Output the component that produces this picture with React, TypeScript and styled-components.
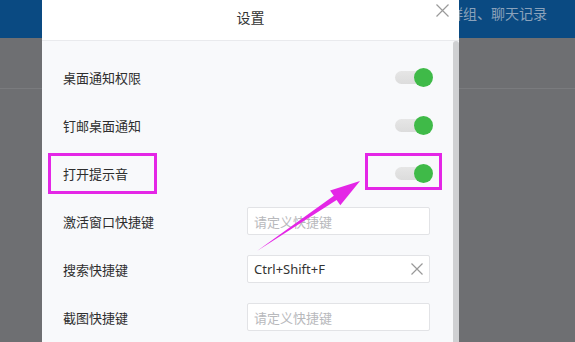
import React, { FC } from 'react'
import styled, { createGlobalStyle } from 'styled-components'

const GlobalStyle = createGlobalStyle`
  html, body {
    margin: 0;
    padding: 0;
    background: #6e6f72;
  }
  body {
    font-family: "Noto Sans", "Noto Sans CJK SC", sans-serif;
  }
`

const Page = styled.div`
  position: relative;
  width: 575px;
  height: 342px;
  overflow: hidden;
  background: #6e6f72;
`

const TopBar = styled.div`
  height: 38px;
  background: #0a4a82;
  display: flex;
  justify-content: flex-end;
  align-items: flex-start;
  padding: 5px 28px 0 0;
  box-sizing: border-box;
`

const TopText = styled.span`
  font-size: 14px;
  line-height: 16px;
  color: #8aa2bb;
  font-family: "Noto Sans CJK SC", sans-serif;
`

const SubBar = styled.div`
  height: 50px;
  border-bottom: 1px solid #7a7b7e;
`

const Dialog = styled.div`
  position: absolute;
  left: 42px;
  top: 0;
  width: 417px;
  height: 420px;
  background: #f8f9fb;
  display: flex;
  flex-direction: column;
`

const Header = styled.div`
  position: relative;
  height: 40px;
  flex: none;
  background: #fff;
  border-bottom: 1px solid #e9eaed;
  display: flex;
  align-items: center;
  justify-content: center;
`

const Title = styled.span`
  font-size: 14px;
  color: #333;
  font-family: "Noto Sans CJK SC", sans-serif;
  margin-top: -6px;
`

const CloseButton = styled.button`
  position: absolute;
  right: 9px;
  top: 3px;
  width: 15px;
  height: 15px;
  padding: 0;
  border: 0;
  background: none;
  display: flex;
  align-items: center;
  justify-content: center;
`

const Body = styled.div`
  flex: 1;
  display: flex;
`

const Content = styled.div`
  flex: 1;
  padding: 12px 22px 0 21px;
`

const Scrollbar = styled.div`
  width: 6px;
  background: #cfd0d2;
  border-radius: 3px 3px 0 0;
`

const Row = styled.div`
  display: grid;
  grid-template-columns: 184px 1fr;
  align-items: center;
  height: 48px;
`

const Label = styled.span`
  font-size: 13px;
  color: #2e2e2e;
  font-family: "Noto Sans CJK SC", sans-serif;
`

const Switch = styled.div<{ $on: boolean }>`
  justify-self: end;
  margin-right: -2px;
  position: relative;
  width: 38px;
  height: 19px;

  &::before {
    content: '';
    position: absolute;
    left: 0;
    top: 3px;
    width: 34px;
    height: 13px;
    border-radius: 7px;
    background: linear-gradient(#e6e6e6, #dcdcdc);
  }

  &::after {
    content: '';
    position: absolute;
    top: 0;
    left: ${(p) => (p.$on ? '19px' : '0')};
    width: 19px;
    height: 19px;
    border-radius: 50%;
    background: ${(p) => (p.$on ? '#3fba48' : '#fff')};
  }
`

const InputBox = styled.div`
  width: 183px;
  height: 28px;
  box-sizing: border-box;
  border: 1px solid #e2e3e6;
  border-radius: 2px;
  background: #fff;
  display: flex;
  align-items: center;
  padding: 0 6px;
`

const InputText = styled.span<{ $empty: boolean }>`
  flex: 1;
  font-size: 13px;
  color: ${(p) => (p.$empty ? '#b8b9bc' : '#333')};
  font-family: ${(p) =>
    p.$empty ? '"Noto Sans CJK SC", sans-serif' : '"Noto Sans", "Noto Sans CJK SC", sans-serif'};
`

const ClearButton = styled.span`
  flex: none;
  display: flex;
`

const Highlight = styled.div<{ $x: number; $y: number; $w: number; $h: number }>`
  position: absolute;
  left: ${(p) => p.$x}px;
  top: ${(p) => p.$y}px;
  width: ${(p) => p.$w}px;
  height: ${(p) => p.$h}px;
  box-sizing: border-box;
  border: 3px solid #e426e6;
`

const ArrowLayer = styled.svg`
  position: absolute;
  left: 0;
  top: 0;
  pointer-events: none;
`

const Cross: FC<{ size: number; color: string }> = ({ size, color }) => (
  <svg width={size} height={size} viewBox={`0 0 ${size} ${size}`}>
    <path d={`M0.5 0.5L${size - 0.5} ${size - 0.5}M${size - 0.5} 0.5L0.5 ${size - 0.5}`} stroke={color} strokeWidth="1.2" />
  </svg>
)

type Item =
  | { kind: 'switch'; label: string }
  | { kind: 'shortcut'; label: string; value?: string }

const items: Item[] = [
  { kind: 'switch', label: '桌面通知权限' },
  { kind: 'switch', label: '钉邮桌面通知' },
  { kind: 'switch', label: '打开提示音' },
  { kind: 'shortcut', label: '激活窗口快捷键' },
  { kind: 'shortcut', label: '搜索快捷键', value: 'Ctrl+Shift+F' },
  { kind: 'shortcut', label: '截图快捷键' },
]

const App = () => (
  <Page>
    <GlobalStyle />
    <TopBar>
      <TopText>搜索联系人、群组、聊天记录</TopText>
    </TopBar>
    <SubBar />
    <Dialog>
      <Header>
        <Title>设置</Title>
        <CloseButton>
          <Cross size={13} color="#9a9a9a" />
        </CloseButton>
      </Header>
      <Body>
        <Content>
          {items.map((item) => (
            <Row key={item.label}>
              <Label>{item.label}</Label>
              {item.kind === 'switch' ? (
                <Switch $on />
              ) : (
                <InputBox>
                  <InputText $empty={!item.value}>{item.value ?? '请定义快捷键'}</InputText>
                  {item.value && (
                    <ClearButton>
                      <Cross size={12} color="#999" />
                    </ClearButton>
                  )}
                </InputBox>
              )}
            </Row>
          ))}
        </Content>
        <Scrollbar />
      </Body>
    </Dialog>
    <Highlight $x={48} $y={153} $w={109} $h={41} />
    <Highlight $x={365} $y={153} $w={77} $h={37} />
    <ArrowLayer width="575" height="342">
      <polygon
        points="257,251 336.6,200 340.3,205.3 360,181 330.1,190.5 333.8,195.8"
        fill="#e426e6"
      />
    </ArrowLayer>
  </Page>
)

export default App
